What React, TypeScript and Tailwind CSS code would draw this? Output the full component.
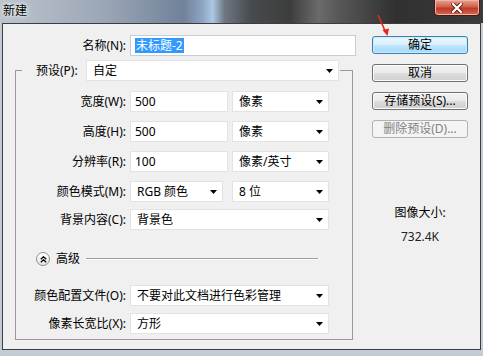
import type { ReactNode } from "react";

const FONT = "font-['Noto_Sans','Noto_Sans_CJK_SC',sans-serif]";

function Arrow() {
  return (
    <svg width="7" height="4" viewBox="0 0 7 4" className="shrink-0">
      <polygon points="0,0 7,0 3.5,4" fill="#000" />
    </svg>
  );
}

function Select({ value, className }: { value: string; className: string }) {
  return (
    <div className={`flex h-[21px] items-center justify-between border border-[#e3e3e3] bg-white pl-[6px] pr-[5px] ${className}`}>
      <span className="leading-none">{value}</span>
      <Arrow />
    </div>
  );
}

function TextBox({ value, className }: { value: ReactNode; className: string }) {
  return (
    <div className={`flex h-[21px] items-center border border-[#e3e3e3] bg-white pl-[4px] ${className}`}>
      <span className="leading-none">{value}</span>
    </div>
  );
}

function Row({ label, children, className = "" }: { label: string; children: ReactNode; className?: string }) {
  return (
    <div className={`flex h-[21px] items-center ${className}`}>
      <span className="w-[110px] text-right leading-none">{label}</span>
      <div className="ml-[4px] flex items-center">{children}</div>
    </div>
  );
}

function Btn({ children, kind = "normal" }: { children: ReactNode; kind?: "normal" | "default" | "disabled" }) {
  const look =
    kind === "default"
      ? "border-[#3c7fb1] bg-[linear-gradient(#eaf6fd,#d9f0fc_50%,#bee6fd_50%,#a7d9f5)] shadow-[inset_0_0_0_1px_#c9ecfc]"
      : kind === "disabled"
        ? "border-[#adb2b5] bg-[#f4f4f4] text-[#838383]"
        : "border-[#707070] bg-[linear-gradient(#f2f2f2,#ebebeb_50%,#dddddd_50%,#cfcfcf)] shadow-[inset_0_0_0_1px_#fcfcfc]";
  return (
    <div className={`flex h-[18px] w-[96px] items-center justify-center rounded-[3px] border leading-none ${look}`}>
      {children}
    </div>
  );
}

export default function App() {
  return (
    <div className={`relative flex h-[356px] w-[483px] flex-col overflow-hidden bg-[#c3cbd4] text-[12px] text-black ${FONT}`}>
      {/* title bar */}
      <div className="flex h-[23px] shrink-0 bg-[linear-gradient(90deg,#bcc4ce_0%,#9ba6b5_22%,#71819a_38%,#8fa6c2_42%,#adc8e4_44%,#6e7780_46.5%,#474a4e_52%,#3d3d3d_60%,#6b6b6b_66%,#585858_70%,#303030_82%,#3b3b3b_100%)]">
        <span className="pl-[3px] pt-[3px] leading-[16px] [text-shadow:0_0_6px_#ffffff,0_0_3px_#ffffff]">新建</span>
        <div className="ml-auto mr-[3px] flex h-[16px] w-[46px] items-center justify-center rounded-b-[4px] border border-t-0 border-[#4a1a12] bg-[linear-gradient(#e9a493,#d0604a_45%,#c0392a_55%,#d46a52)] shadow-[inset_0_0_0_1px_#f1b4a6]">
          <svg width="12" height="10" viewBox="0 0 12 10">
            <path d="M2 1 L10 9 M10 1 L2 9" stroke="#5a1a10" strokeWidth="4" strokeLinecap="square" />
            <path d="M2 1 L10 9 M10 1 L2 9" stroke="#ffffff" strokeWidth="2.2" strokeLinecap="square" />
          </svg>
        </div>
      </div>

      {/* client area */}
      <div className="mx-[2px] flex h-[327px] shrink-0 border border-[#3d3d3d] bg-[#f0f0f0]">
        <div className="flex w-[369px] flex-col pt-[11px]">
          <div className="flex h-[21px] items-center">
            <span className="w-[123px] text-right leading-none">名称(N):</span>
            <div className="ml-[4px] flex h-[21px] w-[226px] items-center border border-[#c5cdd6] bg-white pl-[4px]">
              <span className="bg-[#3399ff] px-px leading-[15px] text-white">未标题-2</span>
            </div>
          </div>

          {/* group box */}
          <div className="ml-[12px] mt-[4px] flex w-[338px] flex-col">
            <div className="flex h-[21px]">
              <div className="flex w-[7px] flex-col">
                <div className="mt-[10px] flex-1 border-l border-t border-[#9a9a9a]" />
              </div>
              <div className="flex w-[318px] items-center pl-[14px]">
                <span className="w-[50px] leading-none">预设(P):</span>
                <Select value="自定" className="w-[253px]" />
              </div>
              <div className="flex w-[13px] flex-col">
                <div className="mt-[10px] flex-1 border-r border-t border-[#9a9a9a]" />
              </div>
            </div>
            <div className="flex flex-col border-x border-b border-[#9a9a9a] pb-[5px] pt-[10px]">
              <Row label="宽度(W):">
                <TextBox value="500" className="w-[98px]" />
                <Select value="像素" className="ml-[4px] w-[97px]" />
              </Row>
              <Row label="高度(H):" className="mt-[9px]">
                <TextBox value="500" className="w-[98px]" />
                <Select value="像素" className="ml-[4px] w-[97px]" />
              </Row>
              <Row label="分辨率(R):" className="mt-[9px]">
                <TextBox value="100" className="w-[98px]" />
                <Select value="像素/英寸" className="ml-[4px] w-[97px]" />
              </Row>
              <Row label="颜色模式(M):" className="mt-[9px]">
                <Select value="RGB 颜色" className="w-[93px]" />
                <Select value="8 位" className="ml-[9px] w-[97px]" />
              </Row>
              <Row label="背景内容(C):" className="mt-[7px]">
                <Select value="背景色" className="w-[199px]" />
              </Row>

              <div className="mt-[22px] flex h-[14px] items-center pl-[20px]">
                <div className="flex h-[14px] w-[14px] items-center justify-center rounded-full border border-[#8e8e8e] bg-[linear-gradient(#ffffff,#e4e4e4)]">
                  <svg width="7" height="7" viewBox="0 0 7 7">
                    <path d="M0.8 3.2 L3.5 0.8 L6.2 3.2 M0.8 6.2 L3.5 3.8 L6.2 6.2" stroke="#000" strokeWidth="1.3" fill="none" />
                  </svg>
                </div>
                <span className="ml-[6px] leading-none">高级</span>
                <div className="ml-[6px] h-[2px] w-[232px] border-t border-b border-t-[#a0a0a0] border-b-white" />
              </div>

              <Row label="颜色配置文件(O):" className="mt-[19px]">
                <Select value="不要对此文档进行色彩管理" className="w-[199px]" />
              </Row>
              <Row label="像素长宽比(X):" className="mt-[7px]">
                <Select value="方形" className="w-[199px]" />
              </Row>
            </div>
          </div>
        </div>

        {/* buttons column */}
        <div className="flex w-[96px] flex-col pt-[12px]">
          <div className="flex flex-col gap-[10px]">
            <Btn kind="default">确定</Btn>
            <Btn>取消</Btn>
            <Btn>存储预设(S)...</Btn>
            <Btn kind="disabled">删除预设(D)...</Btn>
          </div>
          <div className="mt-[68px] text-center leading-[14px]">图像大小:</div>
          <div className="mt-[10px] text-center leading-[14px] text-[#222]">732.4K</div>
        </div>
      </div>

      {/* red pointer arrow */}
      <svg className="absolute left-[372px] top-[12px]" width="22" height="26" viewBox="0 0 22 26">
        <path d="M6 3 L14 21" stroke="#e8251f" strokeWidth="1.6" />
        <polygon points="15.5,24 10.5,18 17,16.5" fill="#e8251f" />
      </svg>
    </div>
  );
}
